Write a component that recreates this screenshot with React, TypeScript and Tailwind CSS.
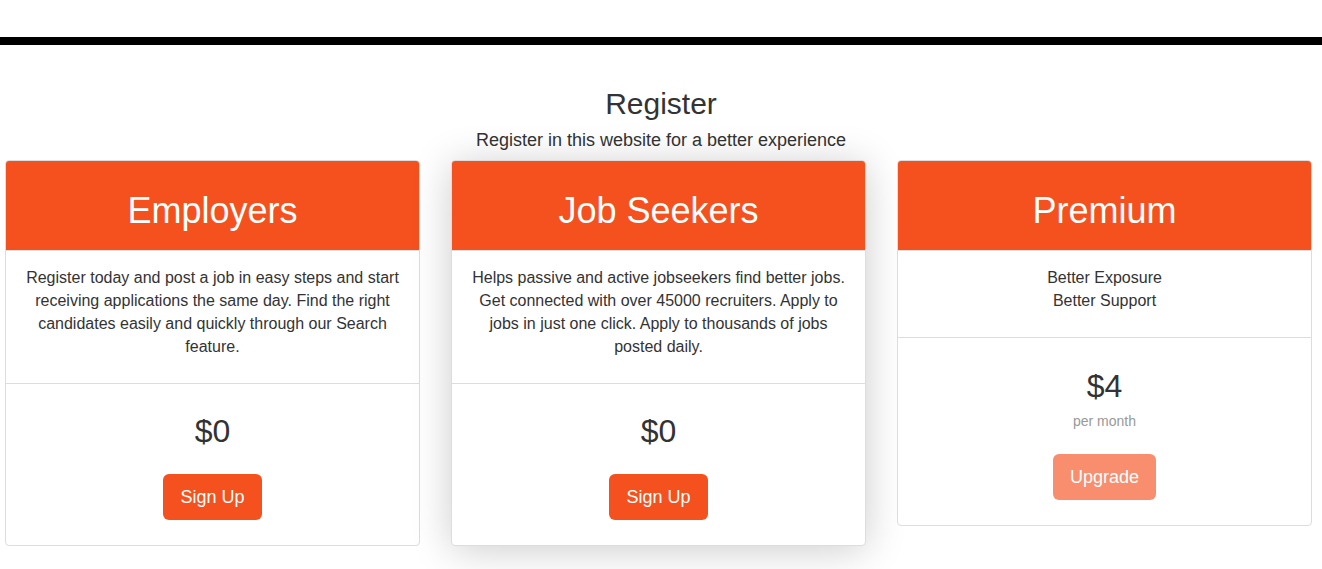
import React from "react";

function Card({
  title,
  children,
  footer,
  shadow,
}: {
  title: string;
  children: React.ReactNode;
  footer: React.ReactNode;
  shadow?: boolean;
}) {
  return (
    <div
      className={
        "w-[415px] self-start rounded-[4px] border border-[#dddddd] bg-white overflow-hidden " +
        (shadow ? "shadow-[0_4px_40px_rgba(0,0,0,0.2)]" : "")
      }
    >
      <div className="h-[90px] bg-[#f4511e] flex items-center justify-center border-b border-[#dddddd]">
        <h1 className="text-[36px] leading-[40px] text-white pt-[11px]">{title}</h1>
      </div>
      <div className="px-[15px] pt-[15px] pb-[25px] text-center text-[16px] leading-[23px] text-[#333333] border-b border-[#dddddd]">
        {children}
      </div>
      <div className="flex flex-col items-center text-[#333333]">{footer}</div>
    </div>
  );
}

function Button({ label, disabled }: { label: string; disabled?: boolean }) {
  return (
    <button
      className={
        "h-[46px] px-[17px] rounded-[6px] text-[18px] leading-[24px] text-white " +
        (disabled ? "bg-[#f88e6d]" : "bg-[#f4511e]")
      }
    >
      {label}
    </button>
  );
}

export default function App() {
  return (
    <div
      className="min-h-[569px] bg-white text-[#333333] overflow-hidden"
      style={{ fontFamily: '"Liberation Sans", Arial, sans-serif' }}
    >
      <div className="h-[37px]" />
      <div className="h-[8px] bg-black" />
      <div className="text-center pt-[42px]">
        <h2 className="text-[30px] leading-[33px] text-[#333333]">Register</h2>
        <p className="text-[18px] leading-[20px] mt-[10px]">Register in this website for a better experience</p>
      </div>
      <div className="flex gap-[31px] pl-[5px] mt-[10px]">
        <Card
          title="Employers"
          footer={
            <>
              <div className="pt-[27px] text-[32px] leading-[40px]">$0</div>
              <div className="mt-[23px] mb-[25px]">
                <Button label="Sign Up" />
              </div>
            </>
          }
        >
          Register today and post a job in easy steps and start receiving applications the same day. Find the
          right candidates easily and quickly through our Search feature.
        </Card>
        <Card
          title="Job Seekers"
          shadow
          footer={
            <>
              <div className="pt-[27px] text-[32px] leading-[40px]">$0</div>
              <div className="mt-[23px] mb-[25px]">
                <Button label="Sign Up" />
              </div>
            </>
          }
        >
          Helps passive and active jobseekers find better jobs. Get connected with over 45000 recruiters. Apply
          to jobs in just one click. Apply to thousands of jobs posted daily.
        </Card>
        <Card
          title="Premium"
          footer={
            <>
              <div className="pt-[28px] text-[32px] leading-[40px]">$4</div>
              <div className="mt-[5px] text-[14px] leading-[20px] text-[#999999]">per month</div>
              <div className="mt-[23px] mb-[25px]">
                <Button label="Upgrade" disabled />
              </div>
            </>
          }
        >
          Better Exposure
          <br />
          Better Support
        </Card>
      </div>
    </div>
  );
}
